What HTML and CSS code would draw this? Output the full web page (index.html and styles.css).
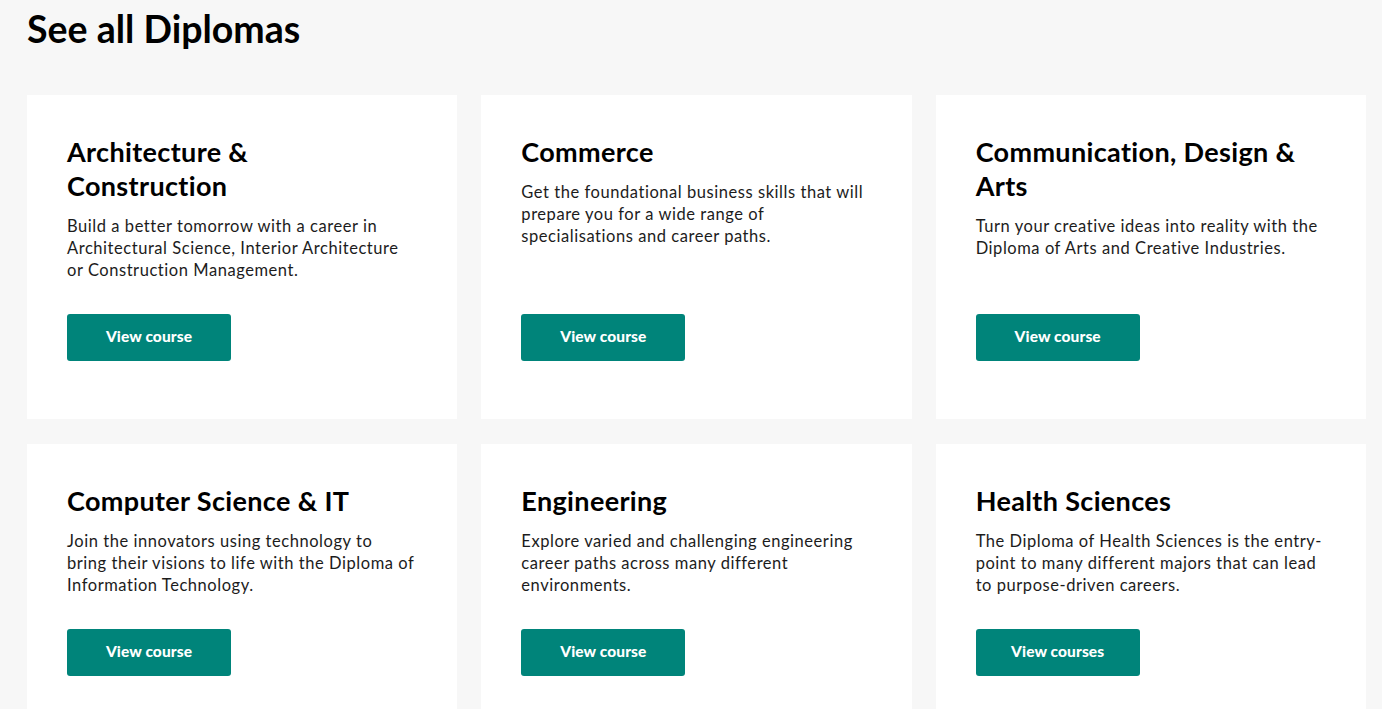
FILE: index.html
```html
<!DOCTYPE html>
<html lang="en">
<head>
<meta charset="utf-8">
<title>See all Diplomas</title>
<link rel="stylesheet" href="styles.css">
</head>
<body>
<main class="page">
  <h1 class="page-title">See all Diplomas</h1>
  <div class="grid">
    <article class="card">
      <h2 class="card-title">Architecture &amp; Construction</h2>
      <p class="card-text">Build a better tomorrow with a career in<br>Architectural Science, Interior Architecture<br>or Construction Management.</p>
      <a class="btn" href="#">View course</a>
    </article>
    <article class="card">
      <h2 class="card-title">Commerce</h2>
      <p class="card-text">Get the foundational business skills that will<br>prepare you for a wide range of<br>specialisations and career paths.</p>
      <a class="btn" href="#">View course</a>
    </article>
    <article class="card">
      <h2 class="card-title">Communication, Design &amp; Arts</h2>
      <p class="card-text">Turn your creative ideas into reality with the<br>Diploma of Arts and Creative Industries.</p>
      <a class="btn" href="#">View course</a>
    </article>
    <article class="card">
      <h2 class="card-title">Computer Science &amp; IT</h2>
      <p class="card-text">Join the innovators using technology to<br>bring their visions to life with the Diploma of<br>Information Technology.</p>
      <a class="btn" href="#">View course</a>
    </article>
    <article class="card">
      <h2 class="card-title">Engineering</h2>
      <p class="card-text">Explore varied and challenging engineering<br>career paths across many different<br>environments.</p>
      <a class="btn" href="#">View course</a>
    </article>
    <article class="card">
      <h2 class="card-title">Health Sciences</h2>
      <p class="card-text">The Diploma of Health Sciences is the entry-<br>point to many different majors that can lead<br>to purpose-driven careers.</p>
      <a class="btn" href="#">View courses</a>
    </article>
  </div>
</main>
</body>
</html>
```
FILE: styles.css
```css
html, body {
  margin: 0;
  padding: 0;
  background: #f7f7f7;
}
body {
  font-family: Lato, "Open Sans", sans-serif;
  color: #111;
  overflow: hidden;
}
.page {
  padding: 6px 16px 0 27px;
}
.page-title {
  margin: 0;
  font-size: 37.5px;
  line-height: 45px;
  font-weight: 700;
  color: #000;
}
.grid {
  margin-top: 44px;
  display: grid;
  grid-template-columns: repeat(3, 1fr);
  gap: 25px 24px;
}
.card {
  background: #fff;
  padding: 40px 40px 58px;
  display: flex;
  flex-direction: column;
  align-items: flex-start;
}
.card-title {
  margin: 0;
  max-width: 330px;
  font-size: 27px;
  line-height: 34px;
  font-weight: 700;
  letter-spacing: 0.35px;
  color: #000;
}
.card-text {
  margin: 12px 0 33px;
  font-size: 16.5px;
  line-height: 22px;
  letter-spacing: 0.55px;
  color: #1c1c1c;
  white-space: nowrap;
}
.btn {
  margin-top: auto;
  box-sizing: border-box;
  width: 164px;
  height: 47px;
  padding-bottom: 3px;
  border-radius: 3px;
  background: #00847a;
  color: #fff;
  font-size: 15.5px;
  font-weight: 900;
  letter-spacing: 0.1px;
  text-decoration: none;
  display: flex;
  align-items: center;
  justify-content: center;
}
```
